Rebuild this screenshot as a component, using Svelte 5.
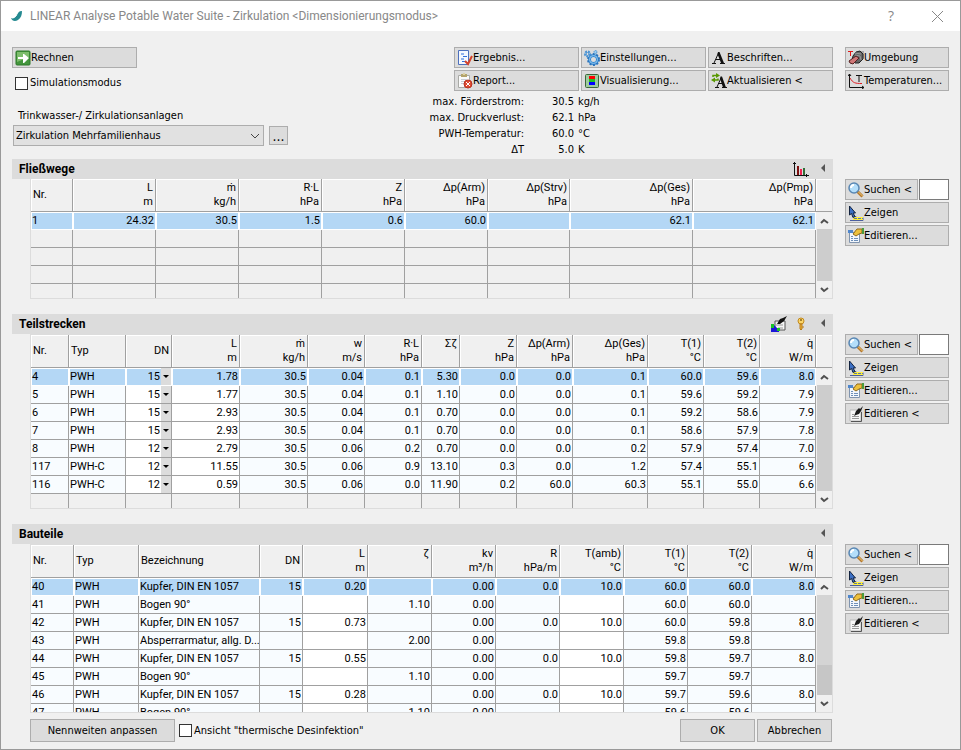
<script lang="ts">
	type Col = { head: string; unit?: string; w: number; left?: boolean; edit?: boolean; select?: boolean };
	type Grid = { id: string; title: string; height: number; pale: boolean; cols: Col[]; rows: string[][]; empty: number };

	const tools = [
		{ icon: 'result', text: 'Ergebnis...' },
		{ icon: 'gear', text: 'Einstellungen...' },
		{ icon: 'letter', text: 'Beschriften...' },
		{ icon: 'report', text: 'Report...' },
		{ icon: 'visual', text: 'Visualisierung...' },
		{ icon: 'refresh', text: 'Aktualisieren <' }
	];

	const summary = [
		['max. Förderstrom:', '30.5', 'kg/h'],
		['max. Druckverlust:', '62.1', 'hPa'],
		['PWH-Temperatur:', '60.0', '°C'],
		['ΔT', '5.0', 'K']
	];

	const grids: Grid[] = [
		{
			id: 'paths',
			title: 'Fließwege',
			height: 120,
			pale: false,
			cols: [
				{ head: 'Nr.', w: 42, left: true },
				{ head: 'L', unit: 'm', w: 83 },
				{ head: 'ṁ', unit: 'kg/h', w: 83 },
				{ head: 'R·L', unit: 'hPa', w: 83 },
				{ head: 'Z', unit: 'hPa', w: 83 },
				{ head: 'Δp(Arm)', unit: 'hPa', w: 83 },
				{ head: 'Δp(Strv)', unit: 'hPa', w: 82 },
				{ head: 'Δp(Ges)', unit: 'hPa', w: 123 },
				{ head: 'Δp(Pmp)', unit: 'hPa', w: 123 }
			],
			rows: [['1', '24.32', '30.5', '1.5', '0.6', '60.0', '', '62.1', '62.1']],
			empty: 4
		},
		{
			id: 'sections',
			title: 'Teilstrecken',
			height: 175,
			pale: true,
			cols: [
				{ head: 'Nr.', w: 38, left: true },
				{ head: 'Typ', w: 57, left: true },
				{ head: 'DN', w: 46, edit: true, select: true },
				{ head: 'L', unit: 'm', w: 68, edit: true },
				{ head: 'ṁ', unit: 'kg/h', w: 68 },
				{ head: 'w', unit: 'm/s', w: 57 },
				{ head: 'R·L', unit: 'hPa', w: 57 },
				{ head: 'Σζ', unit: ' ', w: 38 },
				{ head: 'Z', unit: 'hPa', w: 57 },
				{ head: 'Δp(Arm)', unit: 'hPa', w: 56 },
				{ head: 'Δp(Ges)', unit: 'hPa', w: 75 },
				{ head: 'T(1)', unit: '°C', w: 56 },
				{ head: 'T(2)', unit: '°C', w: 56 },
				{ head: 'q̇', unit: 'W/m', w: 56 }
			],
			rows: [
				['4', 'PWH', '15', '1.78', '30.5', '0.04', '0.1', '5.30', '0.0', '0.0', '0.1', '60.0', '59.6', '8.0'],
				['5', 'PWH', '15', '1.77', '30.5', '0.04', '0.1', '1.10', '0.0', '0.0', '0.1', '59.6', '59.2', '7.9'],
				['6', 'PWH', '15', '2.93', '30.5', '0.04', '0.1', '0.70', '0.0', '0.0', '0.1', '59.2', '58.6', '7.9'],
				['7', 'PWH', '15', '2.93', '30.5', '0.04', '0.1', '0.70', '0.0', '0.0', '0.1', '58.6', '57.9', '7.8'],
				['8', 'PWH', '12', '2.79', '30.5', '0.06', '0.2', '0.70', '0.0', '0.0', '0.2', '57.9', '57.4', '7.0'],
				['117', 'PWH-C', '12', '11.55', '30.5', '0.06', '0.9', '13.10', '0.3', '0.0', '1.2', '57.4', '55.1', '6.9'],
				['116', 'PWH-C', '12', '0.59', '30.5', '0.06', '0.0', '11.90', '0.2', '60.0', '60.3', '55.1', '55.0', '6.6']
			],
			empty: 1
		},
		{
			id: 'parts',
			title: 'Bauteile',
			height: 169,
			pale: true,
			cols: [
				{ head: 'Nr.', w: 43, left: true },
				{ head: 'Typ', w: 65, left: true },
				{ head: 'Bezeichnung', w: 121, left: true },
				{ head: 'DN', w: 43 },
				{ head: 'L', unit: 'm', w: 65, edit: true },
				{ head: 'ζ', unit: ' ', w: 64 },
				{ head: 'kv', unit: 'm³/h', w: 64 },
				{ head: 'R', unit: 'hPa/m', w: 64 },
				{ head: 'T(amb)', unit: '°C', w: 64, edit: true },
				{ head: 'T(1)', unit: '°C', w: 64 },
				{ head: 'T(2)', unit: '°C', w: 64 },
				{ head: 'q̇', unit: 'W/m', w: 64 }
			],
			rows: [
				['40', 'PWH', 'Kupfer, DIN EN 1057', '15', '0.20', '', '0.00', '0.0', '10.0', '60.0', '60.0', '8.0'],
				['41', 'PWH', 'Bogen 90°', '', '', '1.10', '0.00', '', '', '60.0', '60.0', ''],
				['42', 'PWH', 'Kupfer, DIN EN 1057', '15', '0.73', '', '0.00', '0.0', '10.0', '60.0', '59.8', '8.0'],
				['43', 'PWH', 'Absperrarmatur, allg. D...', '', '', '2.00', '0.00', '', '', '59.8', '59.8', ''],
				['44', 'PWH', 'Kupfer, DIN EN 1057', '15', '0.55', '', '0.00', '0.0', '10.0', '59.8', '59.7', '8.0'],
				['45', 'PWH', 'Bogen 90°', '', '', '1.10', '0.00', '', '', '59.7', '59.7', ''],
				['46', 'PWH', 'Kupfer, DIN EN 1057', '15', '0.28', '', '0.00', '0.0', '10.0', '59.7', '59.6', '8.0'],
				['47', 'PWH', 'Bogen 90°', '', '', '1.10', '0.00', '', '', '59.6', '59.6', '']
			],
			empty: 0
		}
	];

	let simulation = $state(false);
	let disinfection = $state(false);

	function share(grid: Grid, col: Col) {
		const total = grid.cols.reduce((sum, c) => sum + c.w, 0);
		return (col.w / total) * 100;
	}
</script>

{#snippet icon(name: string)}
	<svg class="icon" width="16" height="16" viewBox="0 0 16 16" aria-hidden="true">
		{#if name === 'go'}
			<rect x="1" y="1" width="14" height="14" rx="1" fill="#43953c" stroke="#2d7829" />
			<path d="M2 2h12v5L2 12z" fill="#7dbd6c" />
			<path d="M3 7h5V4h1l5 4-5 5H8V9H3z" fill="#fff" />
		{:else if name === 'result'}
			<path d="M1.500 .5h10v14h-10z" fill="#f4f8ff" stroke="#4d70bd" />
			<path d="M4 4h3M6 6.500h4M4 9h3M5 11.500h4" stroke="#2f6fdc" />
			<path d="M8 11l3 3 4-8" fill="none" stroke="#d5442c" stroke-width="2" />
		{:else if name === 'gear'}
			<circle cx="9.500" cy="9.500" r="4" fill="none" stroke="#3a8ad0" stroke-width="3" />
			<circle cx="9.500" cy="9.500" r="5.500" fill="none" stroke="#2a74bd" stroke-width="2" stroke-dasharray="2 1.500" />
			<circle cx="9.500" cy="9.500" r="4" fill="none" stroke="#8cc6f2" />
			<circle cx="3.500" cy="4" r="2.500" fill="none" stroke="#4b94d4" stroke-width="2" stroke-dasharray="2 1" />
			<circle cx="3.500" cy="4" r="1.500" fill="none" stroke="#4b94d4" />
			<circle cx="11.500" cy="2" r="1.500" fill="#9ccdf0" stroke="#4b94d4" stroke-dasharray="1.500 .5" />
		{:else if name === 'report'}
			<path d="M1.500 2.500h11v12h-11z" fill="#fafafa" stroke="#a9aaa6" />
			<path d="M4 1h6v3H4z" fill="#b4a46c" />
			<path d="M6 0h2v2H6z" fill="#ddd2a4" />
			<path d="M4 6.500h6M4 8.500h4M4 10.500h3" stroke="#c8ccd4" />
			<circle cx="11" cy="11" r="4" fill="#df4b32" stroke="#b83222" />
			<path d="M9 9l4 4M13 9l-4 4" stroke="#fff" />
		{:else if name === 'visual'}
			<rect x="1.500" y="1.500" width="13" height="13" rx="1" fill="#9fcb9f" stroke="#39683b" />
			<path d="M5 3h6v3H5z" fill="#f00" />
			<path d="M5 6h6v4H5z" fill="#1dc51d" />
			<path d="M5 9h6v3H5z" fill="#00f" />
		{:else if name === 'letter' || name === 'refresh'}
			<path
				d={name === 'letter'
					? 'M3 13l4.500-10M5 9.500h5M1 13.500h4M9 13.500h5'
					: 'M6 14l4-9M7 10.500h5M4 14.500h4M11 14.500h5'}
				fill="none" stroke="#111"
			/>
			<path d={name === 'letter' ? 'M7 2h1.500l4.500 11h-3L6.500 4z' : 'M9.500 3.500h1.500l4 11h-3L9 5.500z'} fill="#111" />
			{#if name === 'refresh'}
				<path d="M2 4V2.500h4M7 5.500V7H3" fill="none" stroke="#589800" stroke-width="1.500" />
				<path d="M5 0l4 2.500L5 5zM4 4.500v5L0 7z" fill="#589800" />
			{/if}
		{:else if name === 'pipe'}
			<path d="M10 1h6v8z" fill="#aaa" />
			<path d="M5 6l3-4 4-1 3 3v5l-4 4H7l-3-3z" fill="#666" stroke="#222" />
			<path d="M7 5l5 1 1 4M7 3l6 1" stroke="#999" fill="none" />
			<path d="M2 13l-1-2 7-5 3 2-6 6z" fill="#cf7777" stroke="#542020" />
			<path d="M0 1.500h5M2.500 1v5" stroke="#e21818" />
		{:else if name === 'temp'}
			<path d="M1.500 1v13.500H16M0 3l1.500-2L3 3M14 13l2 1.500-2 1.500" fill="none" stroke="#111" />
			<path d="M2 5c3 5 5 5.500 12 5.500" fill="none" stroke="#e01c24" />
			<path d="M8 2.500h6M11 2.500V9" stroke="#111" />
		{:else if name === 'search'}
			<path d="M9.500 9.500l5 5" stroke="#b5772a" stroke-width="3" />
			<path d="M10 9.500l4.500 4.500" stroke="#f0cf82" />
			<circle cx="6" cy="6" r="5" fill="#b4defa" stroke="#5a87b3" stroke-width="1.500" />
			<path d="M3 6c0-2 1-3 3-3" fill="none" stroke="#fff" stroke-width="2" />
		{:else if name === 'show'}
			<path d="M4 11.500h4v1h7v3H2" fill="none" stroke="#4a5ea0" />
			<path d="M5 12h10v3H5z" fill="#ffef3c" />
			<path d="M6 13.500h9" stroke="#5c79a8" stroke-dasharray="3 1" />
			<path d="M1.500 1v9l2-1.500 1.500 4 2-1-2-3.500h2.500z" fill="#3b6fc4" stroke="#13233f" />
		{:else if name === 'edit'}
			<path d="M1.500 4.500h10v10h-10z" fill="#f3f7fc" stroke="#8094ae" />
			<path d="M0 2h5v3H0z" fill="#4f86cc" />
			<path d="M3 8.500h2M3 10.500h2M3 12.500h2M6 10.500h4M6 12.500h4" stroke="#6d8fb9" />
			<path d="M5 6l4-5h5v4l-3 1-3 2z" fill="#ecc03c" stroke="#8f691b" />
			<path d="M14 0h2v6h-2z" fill="#4a9c3f" />
		{:else if name === 'pen'}
			<path d="M2 4h11v11H2z" fill="#f8f8f8" stroke="#bbb" />
			<path d="M3 15.500h10.500V6" fill="none" stroke="#555" />
			<path d="M4 8.500h2M4 10.500h7M4 12.500h7" stroke="#999" />
			<path d="M6 10l2-5 3-3 1 1 3-3-2 5-2 3-3 1z" fill="#1b1b1b" />
		{/if}
	</svg>
{/snippet}

<div class="dialog">
	<header class="titlebar">
		<svg width="14" height="14" viewBox="0 0 14 14" aria-hidden="true">
			<path d="M1 9c2 1 4 0 5-2 1-3 3-5 6-5 0 4-1 7-4 9-3 2-6 1-7-2z" fill="#258a91" />
			<path d="M9 1L6 7 4 8" fill="none" stroke="#fff" />
		</svg>
		<h1>LINEAR Analyse Potable Water Suite - Zirkulation &lt;Dimensionierungsmodus&gt;</h1>
		<button class="caption help" aria-label="Hilfe">?</button>
		<button class="caption" aria-label="Schließen">
			<svg width="11" height="11" viewBox="0 0 11 11"><path d="M0 0l11 11M11 0L0 11" stroke="#888" /></svg>
		</button>
	</header>

	<main>
		<div class="layout top">
			<div class="controls">
				<div class="system">
					<button class="btn run">{@render icon('go')}Rechnen</button>
					<label class="check"><input type="checkbox" bind:checked={simulation} />Simulationsmodus</label>
					<label class="caption-label" for="system">Trinkwasser-/ Zirkulationsanlagen</label>
					<div class="picker">
						<div class="combo">
							<select id="system">
								<option>Zirkulation Mehrfamilienhaus</option>
							</select>
							<svg width="9" height="6" viewBox="0 0 9 6"><path d="M0 1l4 4 4-4" fill="none" stroke="#444" /></svg>
						</div>
						<button class="btn more" aria-label="Anlagen verwalten">...</button>
					</div>
				</div>
				<div class="actions">
					<div class="tools">
						{#each tools as tool}
							<button class="btn">{@render icon(tool.icon)}{tool.text}</button>
						{/each}
					</div>
					<dl>
						{#each summary as [name, value, unit]}
							<dt>{name}</dt>
							<dd class="value">{value}</dd>
							<dd>{unit}</dd>
						{/each}
					</dl>
				</div>
			</div>
			<div class="side">
				<button class="btn">{@render icon('pipe')}Umgebung</button>
				<button class="btn">{@render icon('temp')}Temperaturen...</button>
			</div>
		</div>

		{#each grids as grid}
			<section class="layout">
				<div class="panel">
					<div class="bar">
						<h2>{grid.title}</h2>
						{#if grid.id === 'paths'}
							<button class="mini" aria-label="Diagramm">
								<svg width="16" height="16" viewBox="0 0 16 16">
									<path d="M1.500 1v13.500H16M0 2.500h3M13.500 13v3" fill="none" stroke="#111" />
									<path d="M4 5h2v9H4z" fill="#7d1010" />
									<path d="M7 8h2v6H7z" fill="#f02050" />
									<path d="M10 7h2v7h-2z" fill="#316b36" />
								</svg>
							</button>
						{:else if grid.id === 'sections'}
							<button class="mini" aria-label="Farben bearbeiten">
								<svg width="16" height="16" viewBox="0 0 16 16">
									<path d="M4 5h10v9H4z" fill="#f5f5f5" stroke="#555" />
									<path d="M5 9h7M7 12h5" stroke="#999" />
									<path d="M0 16v-4l3-3 5 5v2z" fill="#1b16d8" />
									<path d="M0 8h3v4H0zM6 12h3v3H6z" fill="#18c428" />
									<path d="M6 8l3-5 3-1 4-2-3 5-4 3z" fill="#111" />
								</svg>
							</button>
							<button class="mini" aria-label="Schlüssel">
								<svg width="16" height="16" viewBox="0 0 16 16">
									<circle cx="8" cy="5" r="3" fill="#fbd66a" stroke="#c38a20" />
									<path d="M7 8h2v5l-1 1-1-1z" fill="#f2b533" stroke="#b77b1c" />
									<path d="M10 10v2" stroke="#b77b1c" />
									<circle cx="8" cy="4" r="1" fill="#8a6517" />
								</svg>
							</button>
						{/if}
						<button class="mini fold" aria-label="{grid.title} einklappen">
							<svg width="5" height="8" viewBox="0 0 5 8"><path d="M4 0v8L0 4z" fill="#555" /></svg>
						</button>
					</div>
					<div class="grid" class:framed={grid.pale} style:height="{grid.height}px">
						<div class="view">
							<table class:pale={grid.pale}>
								<colgroup>
									{#each grid.cols as col}
										<col style:width="{share(grid, col)}%" />
									{/each}
								</colgroup>
								<thead>
									<tr>
										{#each grid.cols as col}
											<th class:left={col.left}>
												{col.head}{#if col.unit}<br />{col.unit === ' ' ? '\u00a0' : col.unit}{/if}
											</th>
										{/each}
									</tr>
								</thead>
								<tbody>
									{#each grid.rows as row, r}
										<tr class:selected={r === 0}>
											{#each row as cell, c}
												<td class:left={grid.cols[c].left} class:edit={grid.cols[c].edit}>
													{#if grid.cols[c].select}
														<div class="dn">
															<select aria-label="DN {row[0]}">
																<option>{cell}</option>
															</select>
															<svg width="10" height="17" viewBox="0 0 10 17">
																<path d="M0 0h10v17H0z" fill="#dcdcdc" />
																<path d="M2 7h6L5 10z" fill="#000" />
															</svg>
														</div>
													{:else}
														{cell}
													{/if}
												</td>
											{/each}
										</tr>
									{/each}
									{#each { length: grid.empty } as _}
										<tr class="empty">
											{#each grid.cols as _col}<td></td>{/each}
										</tr>
									{/each}
								</tbody>
							</table>
						</div>
						<div class="scroll">
							<div class="corner"></div>
							<button aria-label="Nach oben">
								<svg width="9" height="6" viewBox="0 0 9 6"><path d="M1 5l3-3 4 3" fill="none" stroke="#505050" stroke-width="2" /></svg>
							</button>
							<div class="track" class:long={grid.id === 'parts'}></div>
							<button aria-label="Nach unten">
								<svg width="9" height="6" viewBox="0 0 9 6"><path d="M1 1l3 3 4-3" fill="none" stroke="#505050" stroke-width="2" /></svg>
							</button>
						</div>
					</div>
				</div>
				<div class="side lower">
					<div class="find">
						<button class="btn">{@render icon('search')}Suchen &lt;</button>
						<input type="text" aria-label="{grid.title} suchen" />
					</div>
					<button class="btn">{@render icon('show')}Zeigen</button>
					<button class="btn">{@render icon('edit')}Editieren...</button>
					{#if grid.id !== 'paths'}
						<button class="btn">{@render icon('pen')}Editieren &lt;</button>
					{/if}
				</div>
			</section>
		{/each}

		<footer class="layout">
			<div class="foot">
				<button class="btn wide">Nennweiten anpassen</button>
				<label class="check"><input type="checkbox" bind:checked={disinfection} />Ansicht "thermische Desinfektion"</label>
				<button class="btn ok">OK</button>
				<button class="btn">Abbrechen</button>
			</div>
		</footer>
	</main>
</div>

<style>
	:global(body) {
		background: #f0f0f0;
	}
	.dialog {
		box-sizing: border-box;
		min-height: 100vh;
		border: 1px solid #999;
		background: #f0f0f0;
		color: #000;
		font: 11px/16px 'DejaVu Sans Condensed', 'Noto Sans', sans-serif;
	}
	button,
	input,
	select {
		box-sizing: border-box;
		margin: 0;
		padding: 0;
		border: 0;
		border-radius: 0;
		background: none;
		color: inherit;
		font: inherit;
	}
	svg {
		display: block;
		flex: none;
	}
	.titlebar {
		display: flex;
		align-items: center;
		height: 30px;
		padding-left: 9px;
		background: #fff;
	}
	h1 {
		flex: 1;
		margin: 0 0 0 6px;
		color: #888;
		font: 12px/16px Roboto, sans-serif;
	}
	.caption {
		display: flex;
		align-items: center;
		justify-content: center;
		width: 46px;
		height: 30px;
	}
	.help {
		color: #888;
		font: 14px/16px 'Open Sans', sans-serif;
	}
	main {
		padding: 16px 11px 6px;
	}
	.layout {
		display: grid;
		grid-template-columns: 1fr 104px;
		column-gap: 12px;
		margin-bottom: 15px;
	}
	.layout.top {
		margin-bottom: 0;
	}
	.layout:last-child {
		margin-bottom: 0;
	}
	.btn {
		display: flex;
		align-items: center;
		height: 21px;
		padding: 0 2px;
		border: 1px solid #adadad;
		background: #dcdcdc;
		line-height: 18px;
		white-space: nowrap;
	}
	.controls {
		display: flex;
		justify-content: space-between;
		height: 112px;
	}
	.system {
		display: flex;
		flex-direction: column;
		align-items: flex-start;
	}
	.run {
		width: 125px;
	}
	.check {
		display: flex;
		align-items: center;
		gap: 2px;
	}
	.system .check {
		margin: 7px 0 0 3px;
	}
	.check input {
		appearance: none;
		width: 13px;
		height: 13px;
		border: 1px solid #333;
		background: #fff;
	}
	.check input:checked {
		background: #333;
	}
	.caption-label {
		margin: 17px 0 1px 6px;
	}
	.picker {
		display: flex;
		align-items: center;
		gap: 5px;
		margin-left: 1px;
	}
	.combo {
		position: relative;
		width: 251px;
	}
	.combo select {
		appearance: none;
		width: 100%;
		height: 21px;
		padding: 0 20px 0 2px;
		border: 1px solid #adadad;
		background: #e1e1e1;
	}
	.combo svg {
		position: absolute;
		top: 8px;
		right: 4px;
		pointer-events: none;
	}
	.more {
		justify-content: center;
		width: 19px;
		height: 19px;
		font-size: 14px;
	}
	.tools {
		display: grid;
		grid-template-columns: repeat(3, 125px);
		gap: 2px;
	}
	dl {
		display: grid;
		grid-template-columns: 70px 50px auto;
		width: 160px;
		margin: 3px 0 0;
	}
	dt,
	.value {
		display: flex;
		justify-content: flex-end;
	}
	dt {
		white-space: nowrap;
	}
	dd {
		margin: 0 0 0 4px;
	}
	.value {
		margin: 0;
	}
	.side {
		display: flex;
		flex-direction: column;
		gap: 2px;
	}
	.lower {
		margin-top: 20px;
	}
	.find {
		display: grid;
		grid-template-columns: 1fr 30px;
		gap: 1px;
	}
	.find input {
		width: 100%;
		height: 21px;
		padding: 0 3px;
		border: 1px solid #7a7a7a;
		background: #fff;
	}
	.bar {
		display: flex;
		align-items: center;
		height: 20px;
		padding: 0 7px;
		background: #dcdcdc;
	}
	h2 {
		flex: 1;
		margin: 0;
		font: bold 12px/20px Roboto, sans-serif;
	}
	.mini {
		margin-right: 6px;
	}
	.fold {
		margin: 0 0 2px 6px;
	}
	.grid {
		box-sizing: border-box;
		display: flex;
		margin-left: 18px;
		border: 1px solid #dcdcdc;
		border-top: 0;
		font: 11px/16px Roboto, sans-serif;
	}
	.framed {
		border-top: 1px solid #dcdcdc;
	}
	.view {
		flex: 1;
		overflow: hidden;
	}
	table {
		width: 100%;
		border-spacing: 0;
		table-layout: fixed;
	}
	th,
	td {
		box-sizing: border-box;
		overflow: hidden;
		padding: 0 2px;
		border: solid #a0a0a0;
		border-width: 0 1px 1px 0;
		text-align: right;
		white-space: nowrap;
	}
	th {
		height: 33px;
		box-shadow: inset 1px 1px #fff;
		font-weight: normal;
		line-height: 14px;
	}
	td {
		height: 18px;
		padding-right: 1px;
		line-height: 17px;
	}
	.left {
		padding-left: 1px;
		text-align: left;
	}
	th.left {
		padding-left: 2px;
	}
	.pale td {
		background: #f8fcff;
	}
	.pale .edit {
		background: #fff;
	}
	.pale .empty td {
		background: #f0f0f0;
	}
	.selected td,
	.pale .selected td {
		border-color: #fff;
		background: #b4d7f5;
		box-shadow: inset 1px 1px #fff;
	}
	.dn {
		position: relative;
		margin-right: -1px;
	}
	.dn select {
		appearance: none;
		display: block;
		width: 100%;
		height: 17px;
		padding-right: 11px;
		text-align: right;
		text-align-last: right;
	}
	.dn svg {
		position: absolute;
		top: 0;
		right: 0;
		pointer-events: none;
	}
	.scroll {
		display: flex;
		flex-direction: column;
		width: 16px;
	}
	.corner {
		height: 33px;
		box-sizing: border-box;
		border-bottom: 1px solid #a0a0a0;
		box-shadow: inset 1px 1px #fff;
	}
	.scroll button {
		display: flex;
		align-items: center;
		justify-content: center;
		height: 17px;
	}
	.track {
		flex: 1;
		margin-left: 1px;
		background: #cdcdcd;
	}
	.long {
		background: linear-gradient(#d4d4d4 70%, #c6c6c6 70%);
	}
	.foot {
		display: flex;
		align-items: center;
		gap: 2px;
		margin-left: 18px;
		padding-right: 1px;
	}
	footer {
		margin-top: -9px;
	}
	.foot .btn {
		justify-content: center;
		width: 75px;
		height: 23px;
	}
	.foot .wide {
		width: 145px;
	}
	.foot .check {
		margin-left: 2px;
	}
	.foot .ok {
		margin-left: auto;
	}
</style>
